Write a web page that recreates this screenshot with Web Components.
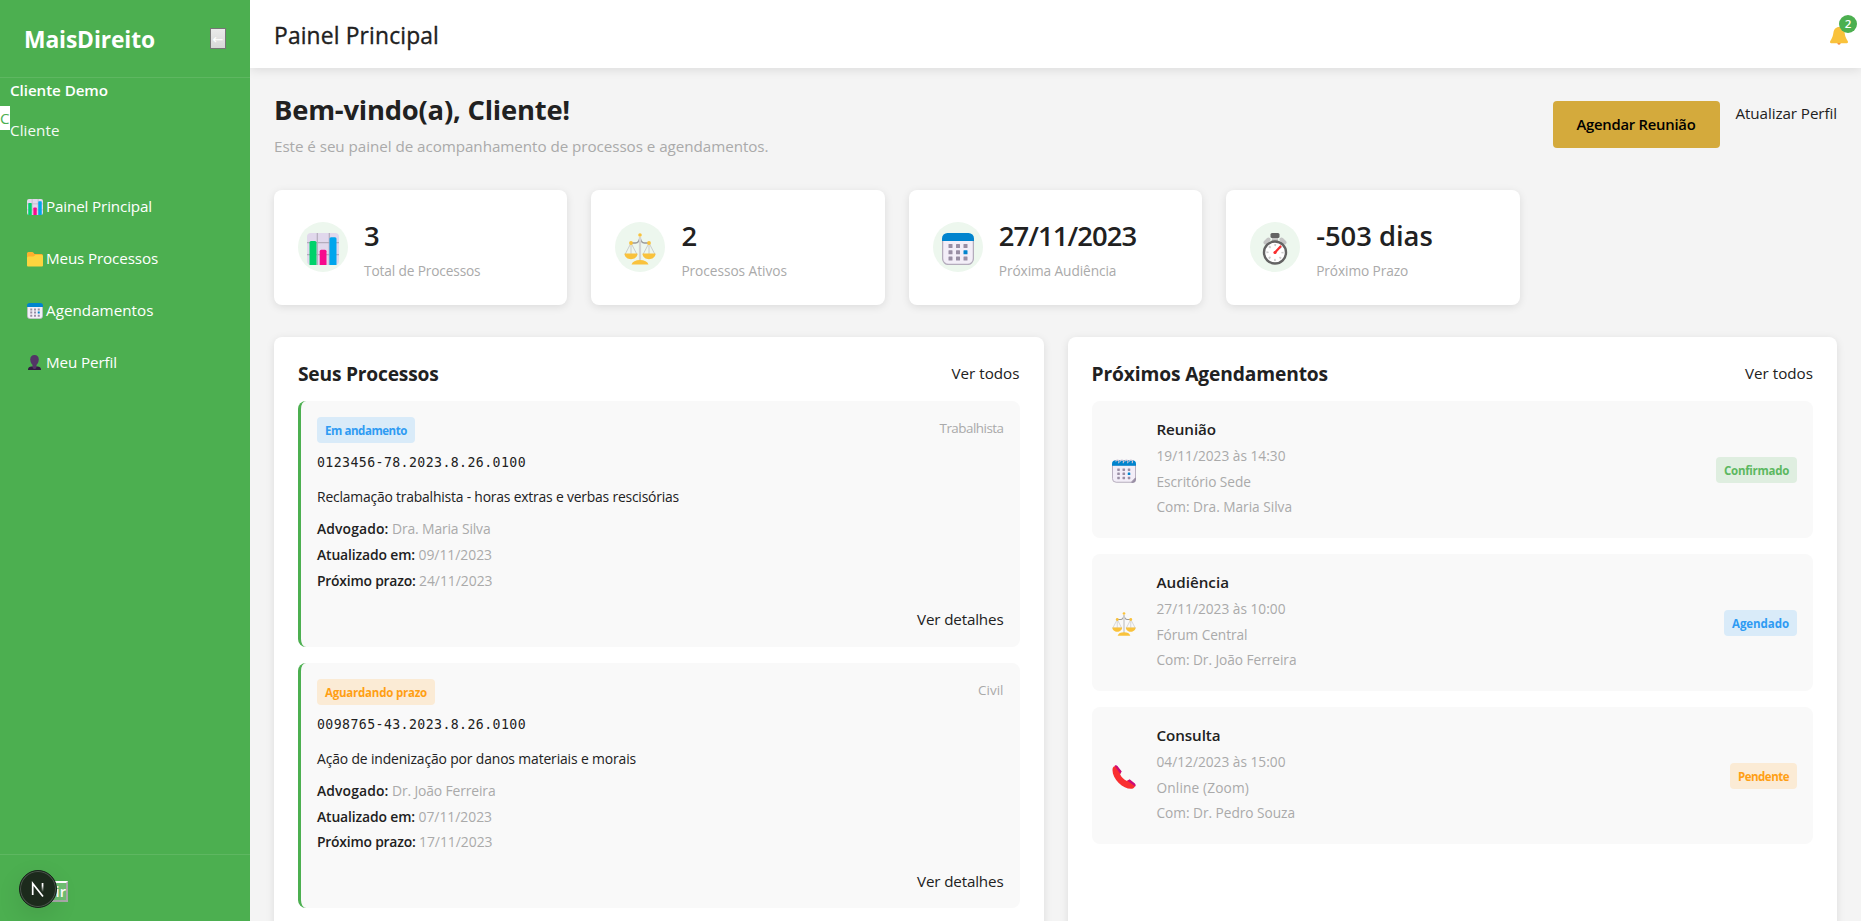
<!DOCTYPE html>
<html lang="pt-BR">
<head>
<meta charset="utf-8">
<title>MaisDireito</title>
<style>
html,body{margin:0;height:100%;overflow:hidden;background:#f4f4f4}
body{font-family:"Open Sans","Noto Sans",sans-serif;font-size:15.2px;line-height:24px;color:#212121}
</style>
</head>
<body>
<dashboard-app></dashboard-app>
<script>
const define = (name, html, after) => {
  const t = document.createElement('template');
  t.innerHTML = html;
  customElements.define(name, class extends HTMLElement {
    connectedCallback() {
      if (this.shadowRoot) return;
      const root = this.attachShadow({mode: 'open'});
      root.append(t.content.cloneNode(true));
      if (after) after(this, root);
    }
  });
};

/* Text that is tracked to a given advance width */
define('fit-text', `<style>:host{display:inline-block;white-space:nowrap}</style><slot></slot>`, el => {
  const w = parseFloat(el.getAttribute('w'));
  if (!w) return;
  const natural = el.getBoundingClientRect().width;
  el.style.letterSpacing = ((w - natural) / el.textContent.length) + 'px';
});

const dots = (xs, ys, s) => ys.map((y, j) => xs.map((x, i) =>
  `<rect x="${x}" y="${y}" width="${s}" height="${s}" rx=".5" fill="${i === 2 && j === 1 ? '#0084ce' : '#998ea4'}"/>`).join('')).join('');
const ICONS = {
  chart: `<rect width="32" height="32" rx="4" fill="#e1d8ec"/><path d="M10.3 0v32M22.3 0v32M0 9.7h32M0 21.7h32" stroke="#b4acbc" stroke-width="1.2"/><path d="M2.5 9.5a1.5 1.5 0 0 1 1.5-1.500h4a1.500 1.500 0 0 1 1.500 1.500V32h-7z" fill="#00d26a"/><path d="M12.700 18.300a1.500 1.500 0 0 1 1.500-1.500h3.800a1.500 1.500 0 0 1 1.500 1.500V32h-6.800z" fill="#f70a8d"/><path d="M22.500 5.800a1.500 1.500 0 0 1 1.500-1.500h4a1.500 1.500 0 0 1 1.500 1.500V32h-7z" fill="#00a6ed"/>`,
  folder: `<path d="M0 5a3 3 0 0 1 3-3h7.500a3 3 0 0 1 2.200 1l2.300 3H29a3 3 0 0 1 3 3v6H0z" fill="#ffb02e"/><path d="M0 14a3 3 0 0 1 3-3h9c1.500 0 2.300-.5 3-1.300l.7-.7c.8-.7 1.500-1 2.600-1H29a3 3 0 0 1 3 3v18a2 2 0 0 1-2 2H2a2 2 0 0 1-2-2z" fill="#fcd53f"/>`,
  calendar: `<path d="M.6 7h30.800v18.500a6 6 0 0 1-6 6H6.600a6 6 0 0 1-6-6z" fill="#f3eef8" stroke="#b4acbc" stroke-width="1.300"/><path d="M0 8V5.500A5.500 5.500 0 0 1 5.500 0h21A5.500 5.500 0 0 1 32 5.500V8z" fill="#0084ce"/>${dots([6.5, 14, 21.5], [11, 17.2, 23.4], 4)}`,
  spiral: `<path d="M.6 8h30.800v17l-6 6H5.600a5 5 0 0 1-5-5z" fill="#f3eef8" stroke="#b4acbc" stroke-width="1.300"/><path d="M0 9V6.500A5 5 0 0 1 5 1.500h22a5 5 0 0 1 5 5V9z" fill="#0084ce"/><path d="M25 32l7-8v3a5 5 0 0 1-5 5z" fill="#998ea4"/>${[5, 11, 17, 23].map(x => `<path d="M${x} 3.500a2.200 2.200 0 1 1 3.400 2" fill="none" stroke="#cdc4d6" stroke-width="1.500"/>`).join('')}${dots([7, 14, 21], [12.500, 18, 23.500], 3.400)}`,
  scales: `<path d="M7 10h4.500c2.500 0 4-2 4.500-6 .5 4 2 6 4.500 6H25" fill="none" stroke="#9b9b9b" stroke-width="1.500"/><path d="M16 4v24" stroke="#d3d3d3" stroke-width="2.200"/><path d="M7 10L1 21.500h12zM7 10v11M25 10l-6 11.500h12zM25 10v11" fill="none" stroke="#c6c6c6" stroke-width=".9"/><circle cx="16" cy="2" r="1.800" fill="#f9c23c"/><circle cx="7" cy="10" r="1.900" fill="#f9c23c"/><circle cx="25" cy="10" r="1.900" fill="#f9c23c"/><path d="M.5 20.500h13c0 3.500-3 5.700-6.500 5.700S.5 24 .5 20.500zM18.500 20.500h13c0 3.500-3 5.700-6.500 5.700s-6.500-2.200-6.500-5.700zM7.500 31.500c1-3 4-4.500 8.500-4.500s7.500 1.500 8.500 4.500z" fill="#f9c23c"/>`,
  watch: `<path d="M6.500 9.500l3-3M25.500 9.500l-3-3" stroke="#c4c4c4" stroke-width="4" stroke-linecap="round"/><rect x="13" y="4" width="6" height="4" fill="#c4c4c4"/><rect x="11.500" y="0" width="9" height="5" rx="1.500" fill="#636363"/><circle cx="16" cy="19.500" r="11" fill="#fff" stroke="#636363" stroke-width="2.400"/><circle cx="16" cy="19.500" r="7.500" fill="none" stroke="#ccc" stroke-width="2.200" stroke-dasharray="1.800 4.090" stroke-dashoffset=".9"/><path d="M16 19.500l5.500-6" stroke="#f92f30" stroke-width="2.200" stroke-linecap="round"/><circle cx="16" cy="19.500" r="1.600" fill="#f92f30"/>`,
  person: `<path d="M2 30v-1c0-4 3-6 7-6h12c4 0 7 2 7 6v1z" fill="#321b41"/><path d="M11 18h8v6a4 4 0 0 1-8 0z" fill="#533566"/><path d="M15 0c5.500 0 8.500 3.500 8.500 8.500 0 6-3 12-8.500 12s-8.500-6-8.500-12C6.500 3.500 9.500 0 15 0z" fill="#533566"/>`,
  phone: `<path d="M1 4C2 1 5 .5 7 2l4.500 6c1 1.500.5 3-.8 4 1.500 4 5 7.500 9.300 9.300 1-1.300 2.700-1.700 4-.8l6 4.500c1.500 2 1 4.500-2 6.300-5 1.500-13-1.300-19-7.300S-.5 10 1 4z" fill="#f92f30"/><path d="M3.500 1C5 0 6.500.5 7.500 1.500l5.500 7-2 3zM31 28.500c1-1.500.5-3-.5-4l-7-5.500-3 2z" fill="#ca0b79"/>`,
  bell: `<path d="M13 28h6c0 2-1.300 3.500-3 3.500s-3-1.500-3-3.500z" fill="#f8843d"/><path d="M16 0c5.500 0 9 4 9.800 9.500.7 5 1.700 9.500 4.500 13.500 1 1.500 1.700 2.500 1.700 3.800 0 1.200-.7 2-2 2H2c-1.300 0-2-.8-2-2C0 25.500.7 24.500 1.700 23c2.800-4 3.800-8.500 4.500-13.500C7 4 10.500 0 16 0z" fill="#f9c23c"/>`
};
define('app-icon', `<style>:host{display:block;flex:none}svg{display:block;width:100%;height:100%}</style>`, (el, root) => {
  const s = el.getAttribute('size') + 'px';
  el.style.width = s; el.style.height = s;
  const box = document.createElement('div');
  box.style.height = '100%';
  box.innerHTML = `<svg viewBox="0 0 32 32" preserveAspectRatio="none">${ICONS[el.getAttribute('name')]}</svg>`;
  root.append(box);
});

define('nav-item', `<style>
:host{display:flex;align-items:center;height:52px;padding-left:27px;gap:3px;color:#fff;box-sizing:border-box}
::slotted(app-icon){margin-top:1px}
</style><slot></slot>`);

define('side-bar', `<style>
:host{display:flex;flex-direction:column;width:250px;flex:none;height:921px;background:#4caf50;color:#fff;position:relative;z-index:2}
.brand{height:78px;box-sizing:border-box;border-bottom:1px solid rgba(255,255,255,.1);display:flex;justify-content:space-between;padding:26px 24px 0 24px}
.brand .name{font-weight:700;font-size:22.800px;line-height:28px}
.brand button{width:16px;height:21px;margin-top:2px;padding:0;box-sizing:border-box;border:1px solid #767676;background:linear-gradient(#eaeaea,#d8d8d8);color:#fff;font:13px/21px "DejaVu Sans",sans-serif;overflow:hidden}
.user{height:80px;display:flex;align-items:center}
.avatar{width:10px;height:24px;background:#fff;color:#4caf50;overflow:hidden}
.who{display:flex;flex-direction:column;gap:16px;height:80px}
.who b{font-weight:600;height:24px}
.who span{opacity:.95;height:24px}
nav{margin-top:22px;flex:1}
footer{height:67px;box-sizing:border-box;border-top:1px solid rgba(255,255,255,.1);padding:26px 0 0 37px;display:flex;align-items:flex-start;position:relative}
footer button{height:21px;width:31px;padding:0;box-sizing:border-box;border:2px solid;border-color:#fff #a9a9a9 #a9a9a9 #fff;background:rgba(255,255,255,.2);color:#fff;font:600 14.600px/17px "Open Sans",sans-serif}
.dev{position:absolute;left:19px;top:15px;width:38px;height:38px;border-radius:50%;background:#1c2a1c;box-sizing:border-box;border:1px solid #17231a;box-shadow:inset 0 0 0 1px #4b554c,0 8px 24px rgba(0,0,0,.1)}
.dev svg{display:block;width:36px;height:36px}
</style>
<div class="brand"><fit-text class="name" w="131">MaisDireito</fit-text><button>←</button></div>
<div class="user"><div class="avatar"><fit-text w="10">C</fit-text></div><div class="who"><b><fit-text w="98">Cliente Demo</fit-text></b><span><fit-text w="49.500">Cliente</fit-text></span></div></div>
<nav>
<nav-item><app-icon name="chart" size="16"></app-icon><fit-text w="106">Painel Principal</fit-text></nav-item>
<nav-item><app-icon name="folder" size="16"></app-icon><fit-text w="112">Meus Processos</fit-text></nav-item>
<nav-item><app-icon name="calendar" size="16"></app-icon><fit-text w="107.500">Agendamentos</fit-text></nav-item>
<nav-item><app-icon name="person" size="16"></app-icon><fit-text w="71">Meu Perfil</fit-text></nav-item>
</nav>
<footer><button><fit-text w="27">Sair</fit-text></button>
<div class="dev"><svg viewBox="0 0 36 36"><defs><linearGradient id="a" x1="0" y1="0" x2="0" y2="1"><stop offset=".3" stop-color="#fff"/><stop offset="1" stop-color="#fff" stop-opacity="0"/></linearGradient></defs><path d="M12.700 24V12.500L23 25.500" fill="none" stroke="#fff" stroke-width="1.700"/><rect x="21.700" y="12" width="1.700" height="9" fill="url(#a)"/></svg></div>
</footer>`);

define('top-bar', `<style>
:host{display:flex;justify-content:space-between;height:68px;box-sizing:border-box;background:#fff;box-shadow:0 2px 10px rgba(0,0,0,.1);position:relative;z-index:1;padding:22px 13px 0 24px}
.title{font-size:22.800px;line-height:28px;font-weight:500;-webkit-text-stroke:.35px #212121}
.bell{position:relative;width:18px;height:19px;margin-top:5px}
.badge{position:absolute;left:9px;top:-12px;width:18px;height:18px;border-radius:50%;background:#4caf50;color:#fff;font-size:11.500px;line-height:18px;text-align:center;font-weight:600}
</style><fit-text class="title" w="165">Painel Principal</fit-text><div class="bell"><app-icon name="bell" size="18"></app-icon><span class="badge">2</span></div>`);

define('stat-card', `<style>
:host{display:flex;height:115px;box-sizing:border-box;background:#fff;border-radius:8px;box-shadow:0 2px 8px rgba(0,0,0,.1);padding:32px 24px 0;align-items:flex-start;gap:16px}
.disc{width:50px;height:50px;border-radius:50%;background:#edf7ee;display:flex;align-items:center;justify-content:center;flex:none}
::slotted(app-icon){margin-top:3px}
.body{display:flex;flex-direction:column;margin-top:-3px;gap:6px}
.num{font-size:27.400px;line-height:34px;font-weight:600}
.lab{font-size:13.700px;line-height:24px;color:#aaa}
</style><div class="disc"><slot name="icon"></slot></div><div class="body"><div class="num"><slot name="num"></slot></div><div class="lab"><slot></slot></div></div>`);

define('status-tag', `<style>
:host{display:inline-block;height:26px;line-height:27px;padding:0 8px;border-radius:4px;font-size:11.500px;font-weight:700;background:#dfeee0;color:#5cb860;box-sizing:border-box}
:host([kind=blue]){background:#d9ebf9;color:#2f9bf3}
:host([kind=orange]){background:#fbebd5;color:#ff9f14}
</style><slot></slot>`);

define('panel-box', `<style>
:host{display:block;background:#fff;border-radius:8px;box-shadow:0 2px 8px rgba(0,0,0,.1);padding:24px;min-width:0;height:640px;box-sizing:border-box}
header{display:flex;justify-content:space-between;height:24px;margin-bottom:16px}
.t{font-size:19.200px;font-weight:700;padding-top:1px}
.items{display:flex;flex-direction:column;gap:16px}
</style><header><div class="t"><slot name="title"></slot></div><fit-text w="68">Ver todos</fit-text></header><div class="items"><slot></slot></div>`);

define('case-item', `<style>
:host{display:flex;flex-direction:column;align-items:flex-start;height:245.600px;box-sizing:border-box;background:#f9f9f9;border-left:3px solid #4caf50;border-radius:8px;padding:16px}
.head{display:flex;justify-content:space-between;width:100%;height:26px}
.area{font-size:13.400px;line-height:23px;color:#aaa}
.num{font:13.200px/24px "DejaVu Sans Mono",monospace;margin-top:8px;height:24px}
.desc{font-size:13.900px;margin-top:10px;height:24px}
.meta{font-size:13.900px;line-height:25.600px;margin-top:7.400px;color:#aaa}
.more{align-self:flex-end;margin-top:14.100px;height:24px}
</style><div class="head"><slot name="tag"></slot><div class="area"><slot name="area"></slot></div></div>
<div class="num"><slot name="num"></slot></div><div class="desc"><slot name="desc"></slot></div><div class="meta"><slot></slot></div><div class="more"><fit-text w="86.500">Ver detalhes</fit-text></div>`);

define('meta-row', `<style>:host{display:flex;gap:3.500px;height:25.600px}
.k{font-weight:600;color:#212121}</style><div class="k"><slot name="k"></slot></div><slot></slot>`);

define('event-item', `<style>
:host{display:flex;height:137px;box-sizing:border-box;background:#f9f9f9;border-radius:8px;padding:16px 16px 16px 20px}
.ic{width:24px;align-self:center;padding-top:2px}
.body{flex:1;margin-left:21px;display:flex;flex-direction:column}
.name{font-weight:600;margin-bottom:2px}
.sub{display:flex;flex-direction:column;font-size:13.700px;line-height:25.600px;color:#aaa}
.tag{align-self:center}
.tag ::slotted(*){display:block}
</style><div class="ic"><slot name="icon"></slot></div><div class="body"><div class="name"><slot name="name"></slot></div><div class="sub"><slot></slot></div></div><div class="tag"><slot name="tag"></slot></div>`);

define('welcome-bar', `<style>
:host{display:flex;justify-content:space-between;height:66px}
.h{font-size:27.400px;line-height:34px;font-weight:700;padding-top:1px}
.s{color:#aaa;margin-top:7px}
.act{display:flex;align-items:flex-start;gap:16px;padding-top:9px}
.btn{width:167px;height:47px;border-radius:4px;background:#d4aa3c;color:#000;font-weight:600;font-size:14.800px;text-align:center;line-height:47px}
</style><div><div class="h"><fit-text w="296">Bem-vindo(a), Cliente!</fit-text></div><div class="s"><fit-text w="494.500">Este é seu painel de acompanhamento de processos e agendamentos.</fit-text></div></div>
<div class="act"><div class="btn"><fit-text w="119">Agendar Reunião</fit-text></div><fit-text w="101.500">Atualizar Perfil</fit-text></div>`);

define('dashboard-app', `<style>
:host{display:flex;height:921px;overflow:hidden}
.main{flex:1;min-width:0}
.content{padding:24px}
.stats{display:grid;grid-template-columns:repeat(5,1fr);gap:24px;margin-top:32px}
.panels{display:grid;grid-template-columns:1fr 1fr;gap:24px;margin-top:32px}
</style>
<side-bar></side-bar>
<div class="main"><top-bar></top-bar><div class="content">
<welcome-bar></welcome-bar>
<div class="stats">
<stat-card><app-icon slot="icon" name="chart" size="32"></app-icon><fit-text slot="num" w="14.500">3</fit-text><fit-text w="116.500">Total de Processos</fit-text></stat-card>
<stat-card><app-icon slot="icon" name="scales" size="32"></app-icon><fit-text slot="num" w="14.500">2</fit-text><fit-text w="105.500">Processos Ativos</fit-text></stat-card>
<stat-card><app-icon slot="icon" name="calendar" size="32"></app-icon><fit-text slot="num" w="137.500">27/11/2023</fit-text><fit-text w="117.500">Próxima Audiência</fit-text></stat-card>
<stat-card><app-icon slot="icon" name="watch" size="32"></app-icon><fit-text slot="num" w="116.500">-503 dias</fit-text><fit-text w="92">Próximo Prazo</fit-text></stat-card>
</div>
<div class="panels">
<panel-box><fit-text slot="title" w="140.500">Seus Processos</fit-text>
<case-item><status-tag slot="tag" kind="blue"><fit-text w="82">Em andamento</fit-text></status-tag><fit-text slot="area" w="64">Trabalhista</fit-text><fit-text slot="num" w="209">0123456-78.2023.8.26.0100</fit-text><fit-text slot="desc" w="362">Reclamação trabalhista - horas extras e verbas rescisórias</fit-text>
<meta-row><fit-text slot="k" w="71.500">Advogado:</fit-text><fit-text w="98.500">Dra. Maria Silva</fit-text></meta-row>
<meta-row><fit-text slot="k" w="98">Atualizado em:</fit-text><fit-text w="73.500">09/11/2023</fit-text></meta-row>
<meta-row><fit-text slot="k" w="98.500">Próximo prazo:</fit-text><fit-text w="73.500">24/11/2023</fit-text></meta-row></case-item>
<case-item><status-tag slot="tag" kind="orange"><fit-text w="102">Aguardando prazo</fit-text></status-tag><fit-text slot="area" w="25.500">Civil</fit-text><fit-text slot="num" w="209">0098765-43.2023.8.26.0100</fit-text><fit-text slot="desc" w="319">Ação de indenização por danos materiais e morais</fit-text>
<meta-row><fit-text slot="k" w="71.500">Advogado:</fit-text><fit-text w="103.500">Dr. João Ferreira</fit-text></meta-row>
<meta-row><fit-text slot="k" w="98">Atualizado em:</fit-text><fit-text w="73.500">07/11/2023</fit-text></meta-row>
<meta-row><fit-text slot="k" w="98.500">Próximo prazo:</fit-text><fit-text w="73.500">17/11/2023</fit-text></meta-row></case-item>
</panel-box>
<panel-box><fit-text slot="title" w="236.500">Próximos Agendamentos</fit-text>
<event-item><app-icon slot="icon" name="spiral" size="24"></app-icon><fit-text slot="name" w="59.500">Reunião</fit-text><div><fit-text w="129">19/11/2023 às 14:30</fit-text></div><div><fit-text w="94.500">Escritório Sede</fit-text></div><div><fit-text w="135.500">Com: Dra. Maria Silva</fit-text></div><status-tag slot="tag"><fit-text w="65">Confirmado</fit-text></status-tag></event-item>
<event-item><app-icon slot="icon" name="scales" size="24"></app-icon><fit-text slot="name" w="72.500">Audiência</fit-text><div><fit-text w="129">27/11/2023 às 10:00</fit-text></div><div><fit-text w="91">Fórum Central</fit-text></div><div><fit-text w="140">Com: Dr. João Ferreira</fit-text></div><status-tag slot="tag" kind="blue"><fit-text w="57">Agendado</fit-text></status-tag></event-item>
<event-item><app-icon slot="icon" name="phone" size="24"></app-icon><fit-text slot="name" w="64">Consulta</fit-text><div><fit-text w="129">04/12/2023 às 15:00</fit-text></div><div><fit-text w="92.500">Online (Zoom)</fit-text></div><div><fit-text w="138.500">Com: Dr. Pedro Souza</fit-text></div><status-tag slot="tag" kind="orange"><fit-text w="51">Pendente</fit-text></status-tag></event-item>
</panel-box>
</div></div></div>`);
</script>
</body>
</html>
